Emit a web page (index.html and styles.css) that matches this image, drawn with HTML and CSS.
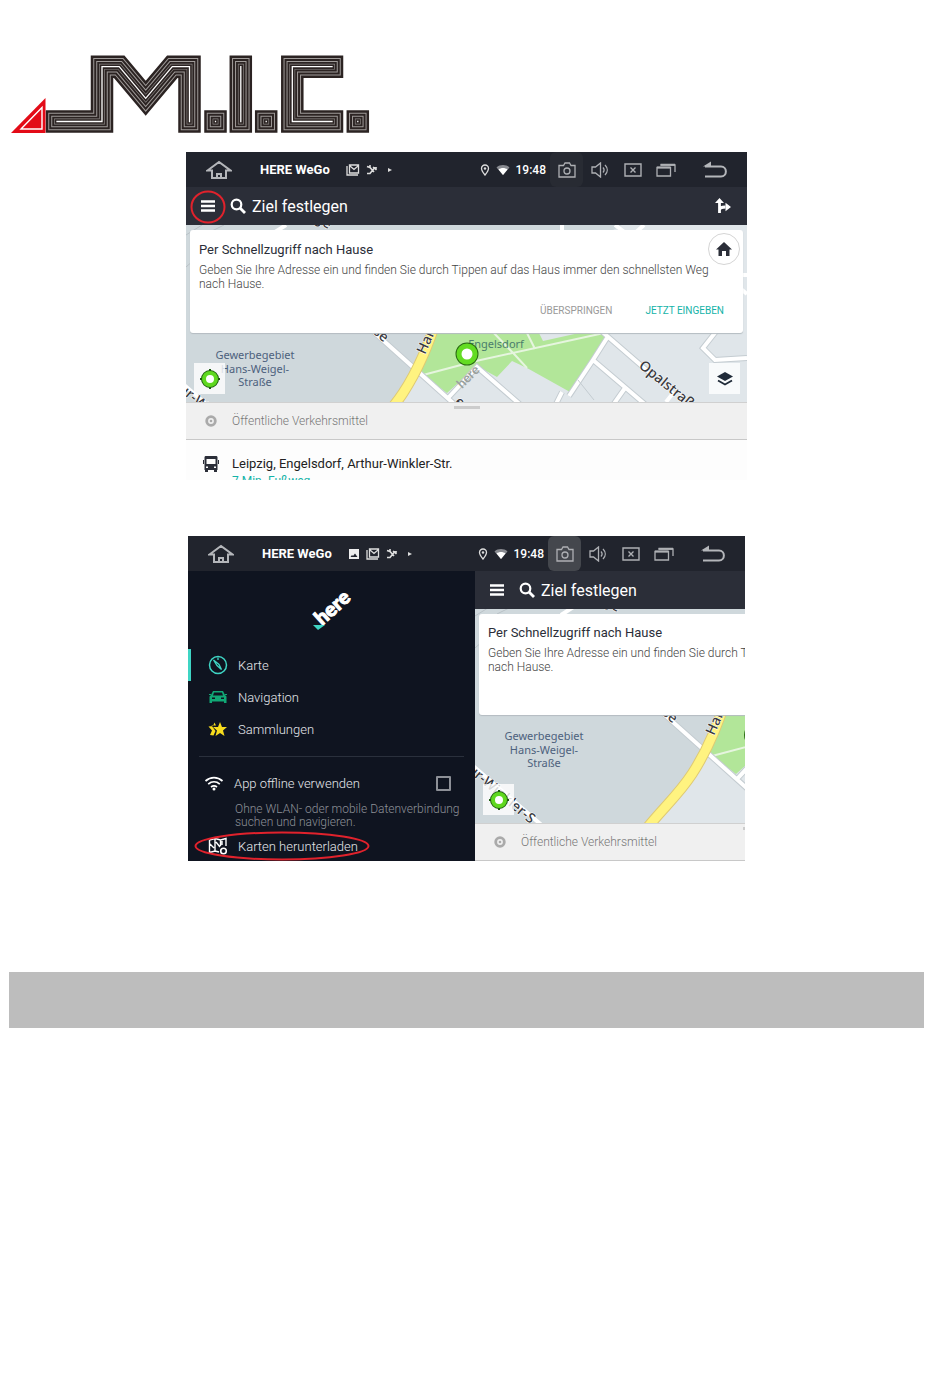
FILE: index.html
```
<!doctype html>
<html lang="de">
    <head>
        <meta charset="utf-8">
        <meta name="viewport" content="width=device-width, initial-scale=1">
        <title>M.I.C. - HERE WeGo</title>
        <link rel="stylesheet" href="styles.css">
    </head>

    <body>
        <!-- shared icons and map shapes -->
        <svg class="defs" aria-hidden="true">
            <symbol id="i-house" viewBox="0 0 26 20">
                <path d="M1.500 10.500 13 2l11.500 8.500H20V18H6v-7.500zM11 18v-4h4v4" fill="none" stroke="#b4b6ba" stroke-width="2"/>
            </symbol>
            <symbol id="i-mail" viewBox="0 0 14 12">
                <path d="M1 2v9h11M3.500 1h9v8h-9zM4 2l4 3.500L12 2" fill="none" stroke="#ddd" stroke-width="1.300"/>
            </symbol>
            <symbol id="i-image" viewBox="0 0 12 12">
                <path d="M1 1h10v10H1zM2.500 9h7L7 5.500 5 8 4 7z" fill="#eee" fill-rule="evenodd"/>
            </symbol>
            <symbol id="i-link" viewBox="0 0 12 12">
                <path d="M1 2.500l3 1 4 4.500M4 3.500V1M1 9.500h3l4-5M7 3l3.500 3M7.500 3.500 11 4" fill="none" stroke="#ddd" stroke-width="1.600"/>
            </symbol>
            <symbol id="i-pin" viewBox="0 0 10 12">
                <path d="M5 11C3 8.500 1.500 6.500 1.500 4.500a3.500 3.500 0 0 1 7 0C8.500 6.500 7 8.500 5 11z" fill="none" stroke="#ddd" stroke-width="1.300"/>
                <circle cx="5" cy="4.500" r="1.200" fill="#ddd"/>
            </symbol>
            <symbol id="i-signal" viewBox="0 0 14 12">
                <path d="M.5 3.500C4 .3 10 .3 13.500 3.500L7 11z" fill="#888a90"/>
                <path d="M2.500 5.500c2.500-2 6.500-2 9 0L7 11z" fill="#fff"/>
            </symbol>
            <symbol id="i-camera" viewBox="0 0 18 16">
                <path d="M1 3.500h4.500L7 1h4.500L13 3.500h4V15H1z" fill="none" stroke="#aeb0b4" stroke-width="1.300"/>
                <circle cx="9" cy="9" r="3" fill="none" stroke="#aeb0b4" stroke-width="1.300"/>
            </symbol>
            <symbol id="i-speaker" viewBox="0 0 18 16">
                <path d="M1 5h3.500L9.500 1v14L4.500 11H1zM12 5.500c1.300 1.500 1.300 3.500 0 5M14 3c3 3 3 7 0 10" fill="none" stroke="#aeb0b4" stroke-width="1.300"/>
            </symbol>
            <symbol id="i-close" viewBox="0 0 18 14">
                <path d="M1 1h16v12H1zM6.500 4.500l5 5M11.500 4.500l-5 5" fill="none" stroke="#aeb0b4" stroke-width="1.400"/>
            </symbol>
            <symbol id="i-windows" viewBox="0 0 20 14">
                <path d="M1 4.500h13.500V13H1zM4.500 2H19v7" fill="none" stroke="#aeb0b4" stroke-width="1.300"/>
                <path d="M1 4.500h13.500M4.500 1.800H19" stroke="#aeb0b4" stroke-width="2"/>
            </symbol>
            <symbol id="i-back" viewBox="0 0 26 18">
                <path d="M3 5.500h16c6.500 0 6.500 10 0 10H3" fill="none" stroke="#b4b6ba" stroke-width="2"/>
                <path d="M1 5.500 9 .5v5z" fill="#b4b6ba"/>
            </symbol>
            <symbol id="i-burger" viewBox="0 0 14 12">
                <path d="M0 1.500h14M0 6h14M0 10.500h14" stroke="#fff" stroke-width="2.400"/>
            </symbol>
            <symbol id="i-search" viewBox="0 0 16 16">
                <circle cx="6.500" cy="6.500" r="4.800" fill="none" stroke="#fff" stroke-width="2.200"/>
                <path d="M10 10l5 5" stroke="#fff" stroke-width="2.800"/>
            </symbol>
            <symbol id="i-route" viewBox="0 0 16 16">
                <path d="M4.500 15V4M4.500 12c0-2.500 2-3 6-3" fill="none" stroke="#fff" stroke-width="2.800"/>
                <path d="M0 5 4.500 0 9 5zM10.500 4.800 16 9l-5.500 4.200z" fill="#fff"/>
            </symbol>
            <symbol id="i-home" viewBox="0 0 16 14">
                <path d="M8 0l8 7.500h-2.500V14H10V9H6v5H2.500V7.500H0z" fill="#2b2e38"/>
            </symbol>
            <symbol id="i-locate" viewBox="0 0 20 20">
                <path d="M10 0v20M0 10h20" stroke="#1d5c10" stroke-width="2"/>
                <circle cx="10" cy="10" r="6" fill="#fff" stroke="#1d5c10" stroke-width="6"/>
                <circle cx="10" cy="10" r="6" fill="#fff" stroke="#5fd81f" stroke-width="4"/>
            </symbol>
            <symbol id="i-layers" viewBox="0 0 16 14">
                <path d="M8 0l8 4.500L8 9 0 4.500z" fill="#1f2a38"/>
                <path d="M1 8.500l7 4 7-4" fill="none" stroke="#1f2a38" stroke-width="1.800"/>
            </symbol>
            <symbol id="i-stop" viewBox="0 0 12 12">
                <circle cx="6" cy="6" r="4.300" fill="none" stroke="#aaa" stroke-width="2.800"/>
                <circle cx="6" cy="6" r="1.300" fill="#aaa"/>
            </symbol>
            <symbol id="map-shapes" viewBox="0 0 561 220" overflow="visible">
                <rect width="561" height="220" fill="#cfd8dc"/>
                <path d="M249 104 227 143 207 177 172 220H561V0H436z" fill="#e0e6ea"/>
                <path d="M0 10 16 0M22 8 38 0M0 42l8-7" stroke="#b9c1c6" stroke-width="1"/>
                <path d="M86 9 100 0" stroke="#fff" stroke-width="4"/>
                <path d="M249 104 233 142l4 8 24 18 30-27 20 11 15-16 15 7 43 24 35-54-5-9z" fill="#b2e699"/>
                <path d="M351 104l6 12 45-10v-4z" fill="#e0e6ea"/>
                <path d="M237 150l53-14 128-28M304 104l25 26 12 13M339 104l10 20" fill="none" stroke="#e6f5df" stroke-width="2"/>
                <g fill="none" stroke="#c4ccd1" stroke-width="6">
                    <path d="M180 100 276 186M262 173l29-31 46 40M413 104l52 45M421 113l-14 22-24 36M407 135l54 46M439 163l-12 17M376 167l-7 14M532 104l-15 19 12 12 32-2"/>
                </g>
                <g fill="none" stroke="#fff" stroke-width="4">
                    <path d="M180 100 276 186M262 173l29-31 46 40M413 104l52 45M421 113l-14 22-24 36M407 135l54 46M439 163l-12 17M376 167l-7 14M532 104l-15 19 12 12 32-2M480 177l8-10M376 0v10M429 0l12 9M458 0l-10 9M553 50h8M555 64l6 5M-2 160 70 222"/>
                </g>
                <path d="M392 155l16 20" stroke="#c4ccd1" stroke-width="1"/>
                <path d="M252 90C244 116 234 142 217 168 204 188 190 200 172 222" fill="none" stroke="#dfca73" stroke-width="11"/>
                <path d="M252 90C244 116 234 142 217 168 204 188 190 200 172 222" fill="none" stroke="#fff380" stroke-width="9"/>
            </symbol>
        </svg>

        <main class="page">
            <header>
                <svg class="logo" viewBox="9 54 362 80" role="img" aria-label="M.I.C.">
                    <defs>
                        <path id="mic" d="M57 121.500h45V66.700h17.200l26.500 31.600 26.600-31.600h17.200v54.800M215.500 121.500h.01M240.800 66.700v54.800M266.200 121.500h.01M332 66.700h-39.700v54.800H332M357.800 121.500h.01"/>
                    </defs>
                    <g fill="none" stroke-linecap="square" stroke-miterlimit="10">
                        <use href="#mic" stroke="#2b2322" stroke-width="22.500"/>
                        <use href="#mic" stroke="#a09c9a" stroke-width="17.500"/>
                        <use href="#mic" stroke="#2b2322" stroke-width="15.500"/>
                        <use href="#mic" stroke="#a09c9a" stroke-width="11.500"/>
                        <use href="#mic" stroke="#2b2322" stroke-width="9.500"/>
                        <use href="#mic" stroke="#8d8987" stroke-width="5.800"/>
                        <use href="#mic" stroke="#2b2322" stroke-width="4.500"/>
                        <use href="#mic" stroke="#fff" stroke-width="1.300"/>
                    </g>
                    <path d="M11 133 45.500 98v35z" fill="#e30b17"/>
                    <path d="M21 129 42 107.500V129z" fill="none" stroke="#fff" stroke-width="1.400"/>
                </svg>
            </header>

            <section class="screen">
                <div class="statusbar">
                    <button class="sys-home" aria-label="Home"><svg width="26" height="20"><use href="#i-house"/></svg></button>
                    <span class="app-name">HERE WeGo</span>
                    <span class="notes">
                        <svg width="14" height="12"><use href="#i-mail"/></svg>
                        <svg width="12" height="12"><use href="#i-link"/></svg>
                        <svg class="dot" width="4" height="6"><path d="M0 1l4 2-4 2z" fill="#ddd"/></svg>
                    </span>
                    <span class="info">
                        <svg width="10" height="12"><use href="#i-pin"/></svg>
                        <svg width="14" height="12"><use href="#i-signal"/></svg>
                        <span class="clock">19:48</span>
                    </span>
                    <button class="sys cam" aria-label="Kamera"><svg width="18" height="16"><use href="#i-camera"/></svg></button>
                    <button class="sys" aria-label="Ton"><svg width="18" height="16"><use href="#i-speaker"/></svg></button>
                    <button class="sys" aria-label="Beenden"><svg width="18" height="14"><use href="#i-close"/></svg></button>
                    <button class="sys" aria-label="Fenster"><svg width="20" height="14"><use href="#i-windows"/></svg></button>
                    <button class="sys-back" aria-label="Zurück"><svg width="26" height="18"><use href="#i-back"/></svg></button>
                </div>
                <div class="searchbar">
                    <button class="burger" aria-label="Menü"><svg width="14" height="12"><use href="#i-burger"/></svg></button>
                    <svg width="16" height="16"><use href="#i-search"/></svg>
                    <input class="search" type="text" placeholder="Ziel festlegen" aria-label="Ziel festlegen">
                    <button class="route" aria-label="Route"><svg width="16" height="16"><use href="#i-route"/></svg></button>
                    <svg class="mark-burger" viewBox="0 0 36 34"><ellipse cx="18" cy="17" rx="16.500" ry="15.500"/></svg>
                </div>
                <div class="map">
                    <svg class="map-bg" viewBox="0 0 561 177" preserveAspectRatio="xMinYMin slice">
                        <use href="#map-shapes" width="561" height="220"/>
                        <g class="street">
                            <text transform="translate(128 -4) rotate(30)">ge</text>
                            <text transform="translate(165 90) rotate(40)">straße</text>
                            <text transform="translate(239 130) rotate(-66)">Hans</text>
                            <text transform="translate(452 142) rotate(39)">Opalstraße</text>
                            <text transform="translate(-8 165) rotate(40)">ur-Winkler-S</text>
                            <text transform="translate(268 178) rotate(40)">er</text>
                        </g>
                        <g class="area">
                            <text x="69" y="134">Gewerbegebiet</text>
                            <text x="69" y="148">Hans-Weigel-</text>
                            <text x="69" y="161">Straße</text>
                            <text class="park" x="310" y="123">Engelsdorf</text>
                        </g>
                        <text class="mark" transform="translate(276 164) rotate(-45)">here</text>
                        <circle cx="281" cy="129" r="8" fill="#fff" stroke="#2a6b14" stroke-width="7"/>
                        <circle cx="281" cy="129" r="8" fill="#fff" stroke="#63dc22" stroke-width="5"/>
                    </svg>
                    <div class="card">
                        <h2>Per Schnellzugriff nach Hause</h2>
                        <p>Geben Sie Ihre Adresse ein und finden Sie durch Tippen auf das Haus immer den schnellsten Weg<br>nach Hause.</p>
                        <div class="actions">
                            <button class="skip">ÜBERSPRINGEN</button>
                            <button class="enter">JETZT EINGEBEN</button>
                        </div>
                    </div>
                    <button class="go-home" aria-label="Nach Hause"><svg width="16" height="14"><use href="#i-home"/></svg></button>
                    <button class="tool locate" aria-label="Standort"><svg width="20" height="20"><use href="#i-locate"/></svg></button>
                    <button class="tool layers" aria-label="Ebenen"><svg width="16" height="14"><use href="#i-layers"/></svg></button>
                </div>
                <div class="transit">
                    <svg width="12" height="12"><use href="#i-stop"/></svg>
                    <span>Öffentliche Verkehrsmittel</span>
                </div>
                <div class="stop">
                    <svg width="16" height="18" viewBox="0 0 16 18">
                        <path d="M3 1h10c1 0 1.500.5 1.500 1.500V15h-13V2.500C1.500 1.500 2 1 3 1zM3.500 4v5h9V4zM3 11.500V13h2v-1.500zM11 11.500V13h2v-1.500z" fill="#2b2e38" fill-rule="evenodd"/>
                        <path d="M2 15h3v2H2zM11 15h3v2h-3zM0 5h1v4H0zM15 5h1v4h-1z" fill="#2b2e38"/>
                    </svg>
                    <div>
                        <div class="stop-name">Leipzig, Engelsdorf, Arthur-Winkler-Str.</div>
                        <div class="walk">7 Min. Fußweg</div>
                    </div>
                </div>
            </section>

            <section class="screen second">
                <div class="statusbar">
                    <button class="sys-home" aria-label="Home"><svg width="26" height="20"><use href="#i-house"/></svg></button>
                    <span class="app-name">HERE WeGo</span>
                    <span class="notes">
                        <svg width="12" height="12"><use href="#i-image"/></svg>
                        <svg width="14" height="12"><use href="#i-mail"/></svg>
                        <svg width="12" height="12"><use href="#i-link"/></svg>
                        <svg class="dot" width="4" height="6"><path d="M0 1l4 2-4 2z" fill="#ddd"/></svg>
                    </span>
                    <span class="info">
                        <svg width="10" height="12"><use href="#i-pin"/></svg>
                        <svg width="14" height="12"><use href="#i-signal"/></svg>
                        <span class="clock">19:48</span>
                    </span>
                    <button class="sys cam active" aria-label="Kamera"><svg width="18" height="16"><use href="#i-camera"/></svg></button>
                    <button class="sys" aria-label="Ton"><svg width="18" height="16"><use href="#i-speaker"/></svg></button>
                    <button class="sys" aria-label="Beenden"><svg width="18" height="14"><use href="#i-close"/></svg></button>
                    <button class="sys" aria-label="Fenster"><svg width="20" height="14"><use href="#i-windows"/></svg></button>
                    <button class="sys-back" aria-label="Zurück"><svg width="26" height="18"><use href="#i-back"/></svg></button>
                </div>
                <div class="split">
                    <nav class="menu">
                        <div class="here">
                            <svg width="44" height="44" viewBox="0 0 44 44">
                                <text transform="translate(12 37) rotate(-42)">here</text>
                                <path d="M3 36h12l-7 5z" fill="#3fd5c4"/>
                            </svg>
                        </div>
                        <a class="item current" href="#karte">
                            <svg width="20" height="20" viewBox="0 0 20 20">
                                <circle cx="10" cy="10" r="8.500" fill="none" stroke="#3fd5c4" stroke-width="1.500"/>
                                <path d="M5.500 5 11 9.500l2.500 5-4.500-4zM10 2.500v2.500" fill="none" stroke="#3fd5c4" stroke-width="1.300"/>
                            </svg>
                            Karte
                        </a>
                        <a class="item" href="#navigation">
                            <svg width="20" height="20" viewBox="0 0 20 20">
                                <path d="M5 4h10l2 4 1.500 1.500V16H16v-1.500H4V16H1.500V9.500L3 8zM6 5.500 5 8.500h10l-1-3zM4 10.500V12h3v-1.500zM13 10.500V12h3v-1.500zM1 7h2v1H1zM17 7h2v1h-2z" fill="#11a875" fill-rule="evenodd"/>
                            </svg>
                            Navigation
                        </a>
                        <a class="item" href="#sammlungen">
                            <svg width="20" height="20" viewBox="0 0 20 20">
                                <path d="M12 3l2 5h5l-4 3.500 1.500 5.500-4.500-3-4.500 3L9 11.500 5 8h5z" fill="#f7dc1e"/>
                                <path d="M6.500 3.500 8 6.500H3.500L7.500 12l-2 4.500L2 16l2-4.500L.5 7.500l4.500-.5z" fill="#f7dc1e"/>
                            </svg>
                            Sammlungen
                        </a>
                        <hr>
                        <label class="item offline">
                            <svg width="20" height="20" viewBox="0 0 20 20">
                                <path d="M1.500 8c5-4.500 12-4.500 17 0M4.200 11.200c3.500-3 8.100-3 11.600 0M7 14c2-1.500 4-1.500 6 0" fill="none" stroke="#fff" stroke-width="1.700"/>
                                <circle cx="10" cy="16" r="1.500" fill="#fff"/>
                            </svg>
                            App offline verwenden
                            <input type="checkbox">
                        </label>
                        <p class="hint">Ohne WLAN- oder mobile Datenverbindung<br>suchen und navigieren.</p>
                        <a class="item download" href="#karten">
                            <svg width="20" height="20" viewBox="0 0 20 20">
                                <path d="M1.500 4 7 2.500 12.500 4 18 2.500V10M1.500 4v12.500L7 15l4 1M7 2.500V15M12.500 4v6M2 8l4 4M8 6l4 5M14 9V5" fill="none" stroke="#fff" stroke-width="1.400"/>
                                <circle cx="15.500" cy="15" r="2.800" fill="#0f1420" stroke="#fff" stroke-width="1.600"/>
                            </svg>
                            Karten herunterladen
                            <svg class="mark-download" viewBox="0 0 176 30" preserveAspectRatio="none"><ellipse cx="88" cy="15" rx="86.500" ry="13.500"/></svg>
                        </a>
                    </nav>
                    <div class="app">
                        <div class="searchbar">
                            <button class="burger" aria-label="Menü"><svg width="14" height="12"><use href="#i-burger"/></svg></button>
                            <svg width="16" height="16"><use href="#i-search"/></svg>
                            <input class="search" type="text" placeholder="Ziel festlegen" aria-label="Ziel festlegen">
                        </div>
                        <div class="map tall">
                            <svg class="map-bg" viewBox="0 3 270 214" preserveAspectRatio="xMinYMin slice">
                                <use href="#map-shapes" width="561" height="220"/>
                                <g class="street">
                                    <text transform="translate(128 -2) rotate(30)">ge</text>
                                    <text transform="translate(165 90) rotate(40)">straße</text>
                                    <text transform="translate(239 130) rotate(-66)">Hans</text>
                                    <text transform="translate(-8 165) rotate(40)">ur-Winkler-S</text>
                                </g>
                                <g class="area">
                                    <text x="69" y="134">Gewerbegebiet</text>
                                    <text x="69" y="148">Hans-Weigel-</text>
                                    <text x="69" y="161">Straße</text>
                                </g>
                                <circle cx="281" cy="129" r="12" fill="#2a6b14"/>
                            </svg>
                            <div class="card">
                                <h2>Per Schnellzugriff nach Hause</h2>
                                <p>Geben Sie Ihre Adresse ein und finden Sie durch Tippen<br>nach Hause.</p>
                            </div>
                            <button class="tool locate" aria-label="Standort"><svg width="20" height="20"><use href="#i-locate"/></svg></button>
                        </div>
                        <div class="transit">
                            <svg width="12" height="12"><use href="#i-stop"/></svg>
                            <span>Öffentliche Verkehrsmittel</span>
                        </div>
                    </div>
                </div>
            </section>

            <footer class="bar"></footer>
        </main>
    </body>

</html>
```
FILE: styles.css
```
*{
    box-sizing: border-box;
}

body{
    margin: 0;
    background-color: white;
    font-family: Roboto, "Liberation Sans", sans-serif;
}

button{
    background: none;
    border: none;
    padding: 0;
    font-family: inherit;
    display: flex;
    align-items: center;
    justify-content: center;
}

svg{
    display: block;
    flex: none;
}

.defs{
    position: absolute;
    width: 0;
    height: 0;
}

.page{
    padding: 54px 26px 40px 9px;
}

.logo{
    width: 362px;
    max-width: 100%;
}

/* head unit screens */
.screen{
    width: 100%;
    max-width: 561px;
    margin: 18px auto 0;
    overflow: hidden;
}

.screen.second{
    max-width: 557px;
    margin-top: 56px;
}

.statusbar{
    display: flex;
    align-items: center;
    height: 35px;
    background-color: #21242d;
    color: white;
    font-size: 12px;
}

.sys-home{
    width: 66px;
}

.app-name{
    margin-left: 8px;
    font-size: 13px;
    font-weight: 700;
}

.notes{
    display: flex;
    align-items: center;
    gap: 6px;
    margin-left: 16px;
}

.dot{
    margin-left: 4px;
}

.info{
    display: flex;
    align-items: center;
    gap: 6px;
    margin-left: auto;
    margin-right: 4px;
}

.clock{
    font-weight: 500;
}

.sys{
    width: 33px;
    height: 35px;
}

.cam{
    background-color: #282b33;
    border-radius: 6px;
}

.cam.active{
    background-color: #44474d;
}

.sys-back{
    width: 65px;
}

.searchbar{
    position: relative;
    display: flex;
    align-items: center;
    height: 38px;
    background-color: #2b2e38;
}

.burger{
    width: 44px;
    height: 38px;
}

.search{
    flex: 1;
    min-width: 0;
    margin-left: 6px;
    padding: 0;
    border: none;
    outline: none;
    background: none;
    color: white;
    font-family: inherit;
    font-size: 16px;
}

.search::placeholder{
    color: white;
    opacity: 1;
}

.route{
    width: 48px;
}

.mark-burger{
    position: absolute;
    left: 4px;
    top: 3px;
    width: 36px;
    height: 34px;
}

.mark-burger ellipse,
.mark-download ellipse{
    fill: none;
    stroke: #e0222c;
    stroke-width: 2;
}

/* map */
.map{
    position: relative;
    min-height: 177px;
    padding: 5px 4px;
    overflow: hidden;
    background-color: #cfd8dc;
}

.map.tall{
    min-height: 214px;
    padding-right: 0;
}

.map-bg{
    position: absolute;
    left: 0;
    top: 0;
    width: 100%;
    height: 100%;
}

.street{
    font: 500 14px "Noto Sans", sans-serif;
    fill: #3a3a3e;
    stroke: white;
    stroke-width: 1px;
    paint-order: stroke;
}

.area{
    font: 11px "Noto Sans", sans-serif;
    fill: #4d617c;
    text-anchor: middle;
}

.park{
    fill: #4a7d6c;
}

.mark{
    font: 700 13px Lato, sans-serif;
    fill: #9aa09c;
}

.card{
    position: relative;
    min-height: 103px;
    padding: 12px 9px 10px;
    border-radius: 3px;
    background-color: white;
    box-shadow: 0 1px 1px #b4bcc1;
}

.card h2{
    margin: 0;
    font-size: 13px;
    font-weight: 400;
    line-height: 16px;
    color: #2b2e38;
}

.card p{
    margin: 5px 0 0;
    font-size: 12px;
    font-weight: 300;
    line-height: 14px;
    color: #444;
}

.tall .card{
    min-height: 101px;
    padding-top: 11px;
    border-radius: 3px 0 0 3px;
    overflow: hidden;
    white-space: nowrap;
}

.actions{
    display: flex;
    justify-content: flex-end;
    gap: 33px;
    margin: 14px 10px 0 0;
}

.actions button{
    font-size: 10px;
    line-height: 12px;
}

.skip{
    color: #999;
}

.enter{
    color: #14b3a8;
}

.go-home{
    position: absolute;
    right: 7px;
    top: 8px;
    width: 32px;
    height: 32px;
    border: 1px solid #d5d5d5;
    border-radius: 50%;
    background-color: white;
}

.tool{
    position: absolute;
    bottom: 8px;
    width: 31px;
    height: 31px;
    background-color: rgba(255, 255, 255, 0.8);
}

.locate{
    left: 8px;
}

.layers{
    right: 7px;
    background-color: #f8fafb;
}

.transit{
    position: relative;
    display: flex;
    align-items: center;
    gap: 15px;
    height: 38px;
    padding-left: 19px;
    background-color: #f0f0f0;
    border-top: 1px solid #d0d0d0;
    border-bottom: 1px solid #c8c8c8;
    font-size: 12px;
    font-weight: 300;
    color: #777;
}

/* drag handle */
.transit::before{
    content: "";
    position: absolute;
    left: 268px;
    top: 3px;
    width: 26px;
    height: 3px;
    background-color: #ccc;
}

.stop{
    display: flex;
    gap: 13px;
    height: 40px;
    padding: 15px 0 0 17px;
    overflow: hidden;
    background-color: #fdfdfd;
}

.stop-name{
    font-size: 13px;
    line-height: 18px;
    color: #222;
}

.walk{
    font-size: 12px;
    line-height: 16px;
    color: #14b3a8;
}

/* side menu */
.split{
    display: flex;
}

.menu{
    flex: none;
    width: 287px;
    background-color: #0f1420;
}

.app{
    flex: 1;
    min-width: 0;
    overflow: hidden;
}

.here{
    display: flex;
    justify-content: center;
    height: 78px;
    padding-top: 18px;
}

.here text{
    font: 900 20px Lato, sans-serif;
    fill: white;
    stroke: white;
    stroke-width: 1px;
}

.item{
    position: relative;
    display: flex;
    align-items: center;
    gap: 10px;
    height: 32px;
    padding-left: 20px;
    color: #e4e6ea;
    font-size: 13px;
    font-weight: 300;
    text-decoration: none;
}

.current{
    padding-left: 17px;
    border-left: 3px solid #3fd5c4;
}

.menu hr{
    margin: 11px 11px 10px;
    border: none;
    border-top: 1px solid #2a303c;
}

.offline{
    padding-left: 16px;
}

.offline input{
    appearance: none;
    width: 15px;
    height: 15px;
    margin: 0 24px 0 auto;
    border: 2px solid #8d9097;
    border-radius: 1px;
}

.hint{
    margin: 4px 0 2px 47px;
    color: #8d9097;
    font-size: 12px;
    font-weight: 300;
    line-height: 13px;
}

.download{
    height: 30px;
}

.mark-download{
    position: absolute;
    left: 6px;
    top: 0;
    width: 176px;
    height: 30px;
}

.bar{
    height: 56px;
    margin-top: 111px;
    background-color: #bdbdbd;
}
```
